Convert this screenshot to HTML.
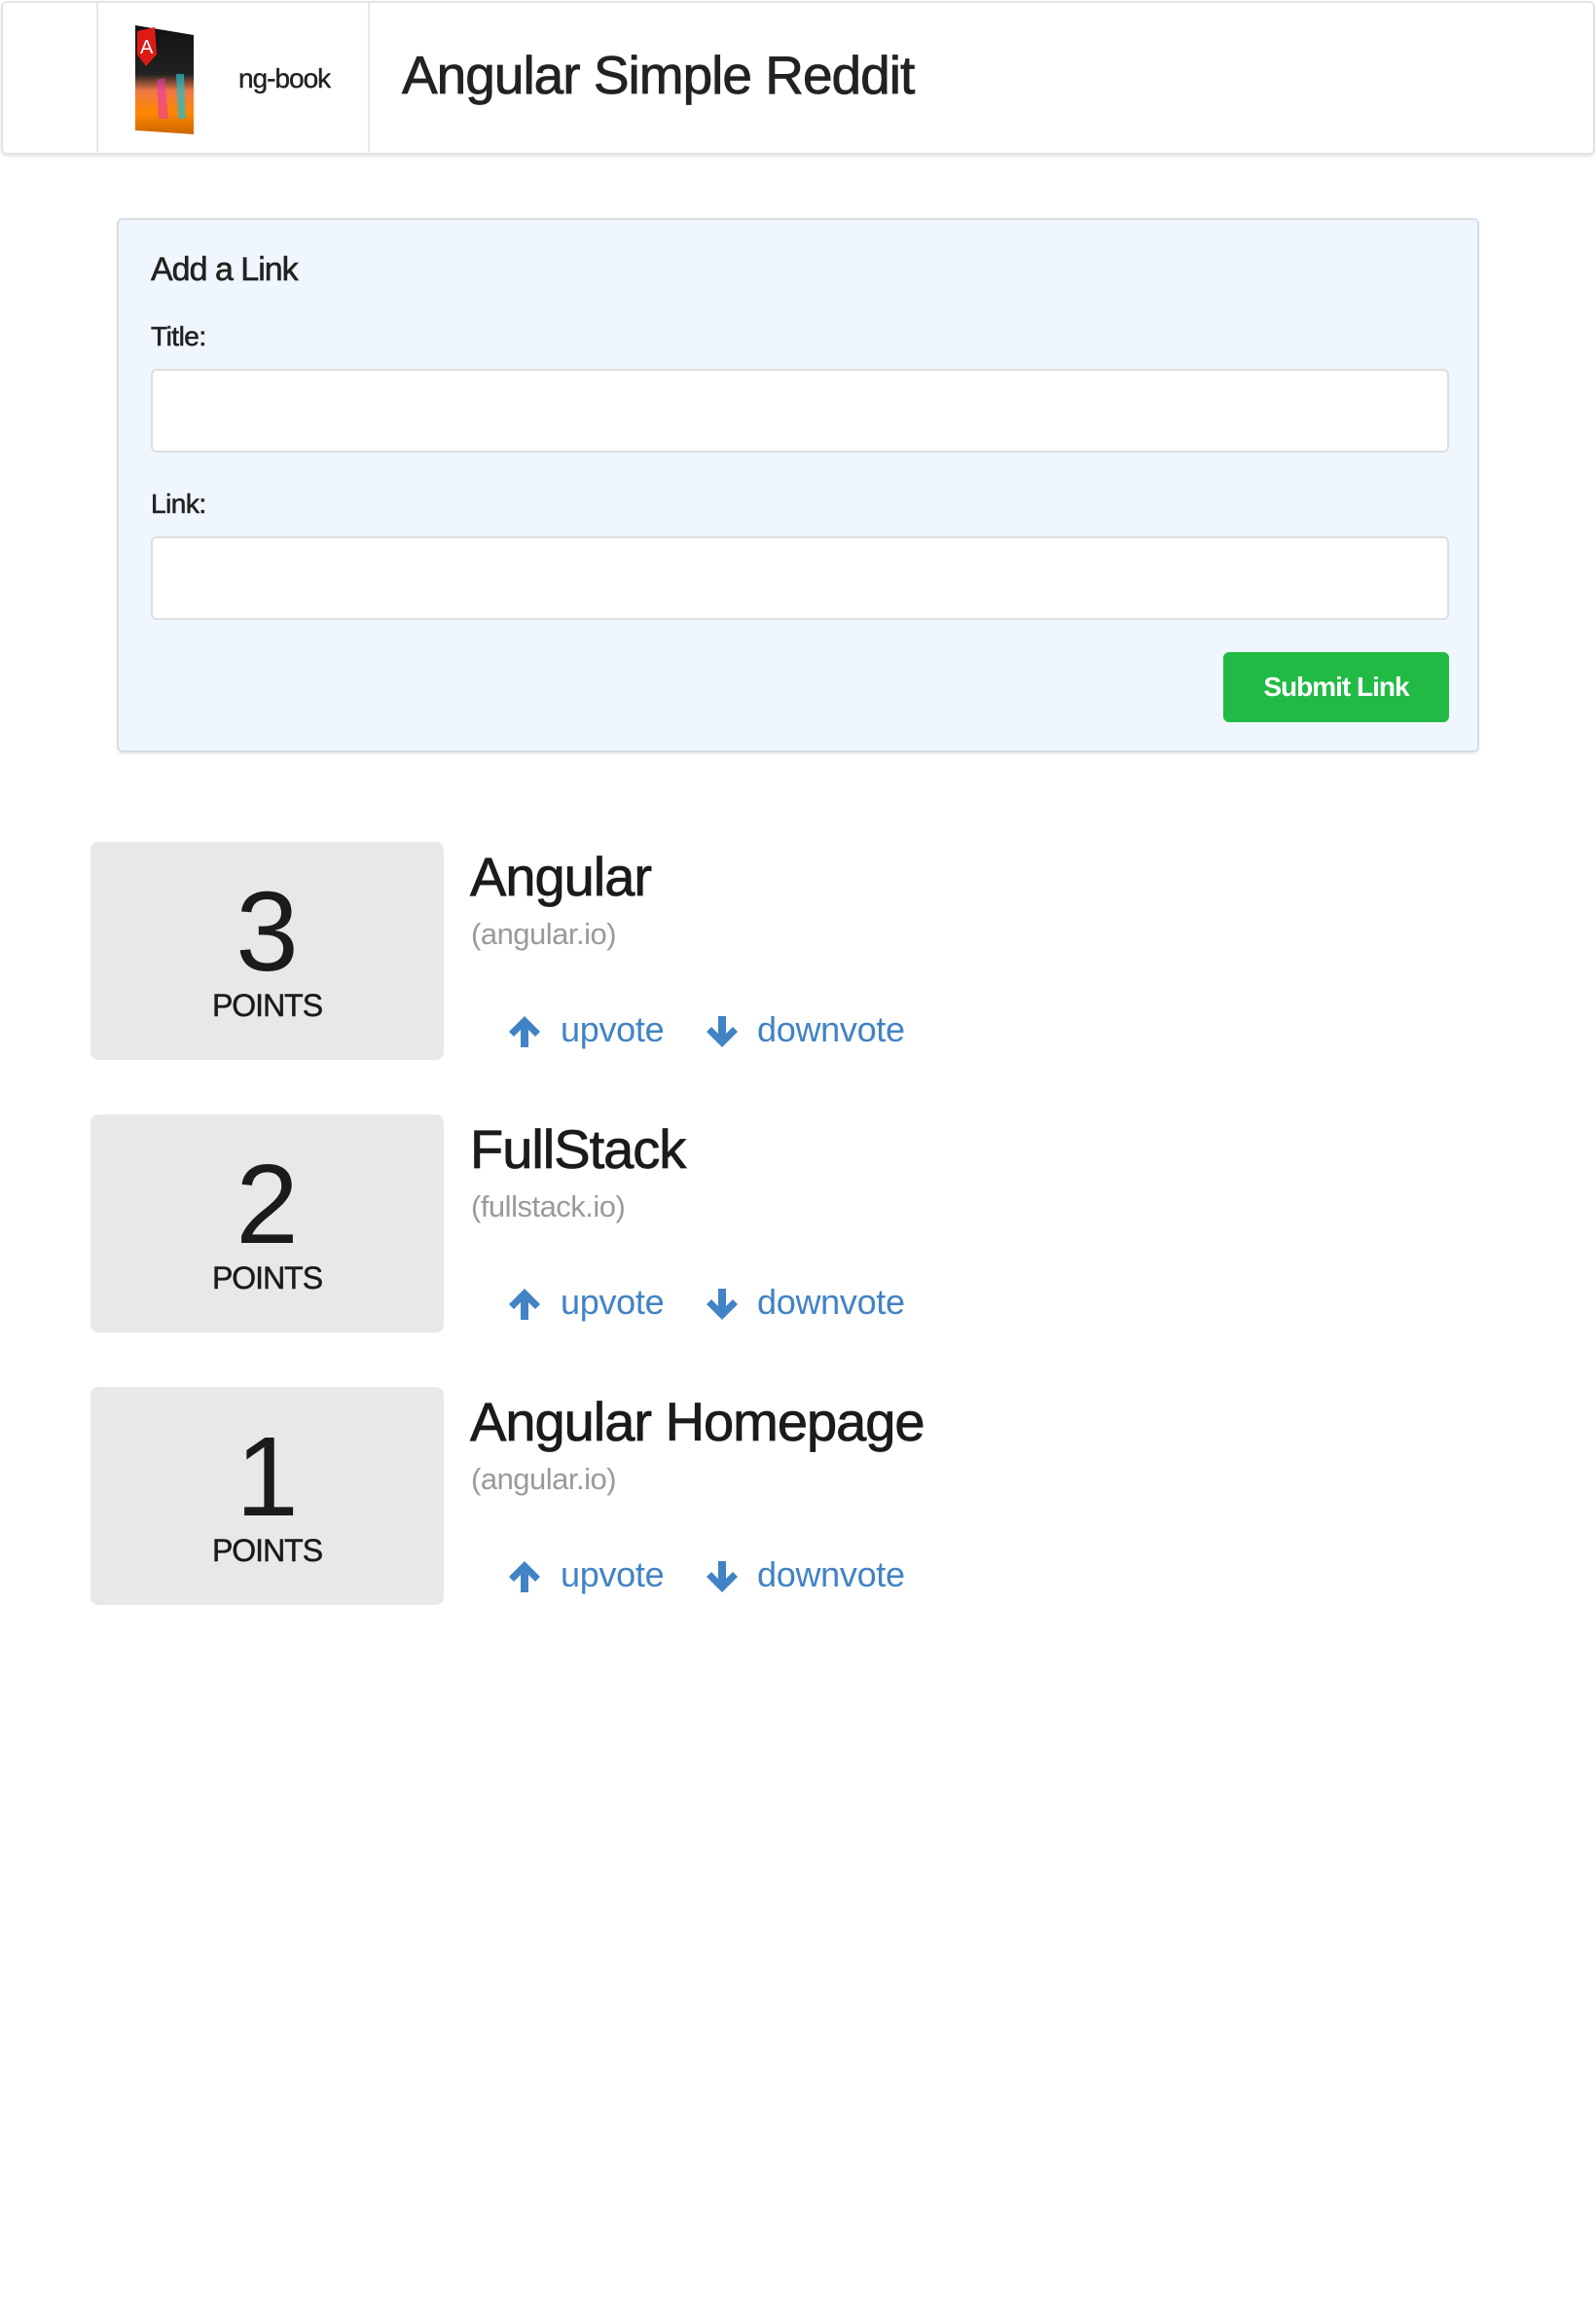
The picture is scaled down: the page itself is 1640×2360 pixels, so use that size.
<!DOCTYPE html>
<html><head><meta charset="utf-8"><style>
*{box-sizing:border-box;margin:0;padding:0}
body{width:1640px;height:2360px;background:#fff;font-family:"Liberation Sans",sans-serif;color:#222;position:relative;overflow:hidden}
.a{position:absolute;white-space:nowrap}
.hdr{position:absolute;left:1px;top:1px;width:1638px;height:158px;border:2px solid #e4e4e4;border-radius:6px;box-shadow:0 2px 3px rgba(0,0,0,.1)}
.vl{position:absolute;top:0;width:2px;height:155px;background:#e8e8e8}
.form{position:absolute;left:120px;top:224px;width:1400px;height:549px;background:#eff6fd;border:2px solid #d6dde5;border-radius:6px;box-shadow:0 2px 3px rgba(0,0,0,.08)}
.inp{position:absolute;left:33px;width:1334px;height:86px;background:#fff;border:2px solid #dedede;border-radius:6px}
.btn{position:absolute;left:1135px;top:444px;width:232px;height:72px;background:#21ba45;border-radius:6px;color:#fff;font-weight:bold;font-size:28px;text-align:center;line-height:72px;letter-spacing:-1px}
.box{position:absolute;left:93px;width:363px;height:224px;background:#e8e8e8;border-radius:8px;text-align:center}
.num{position:absolute;left:0;width:100%;top:32px;font-size:116px;line-height:120px;color:#1b1b1b}
.pts{position:absolute;left:0;width:100%;top:150px;font-size:32px;color:#1b1b1b;letter-spacing:-1px;-webkit-text-stroke:0.5px #1b1b1b}
.t{font-size:56px;color:#1b1b1b;letter-spacing:-1px;-webkit-text-stroke:0.8px #1b1b1b}
.d{font-size:31px;color:#9a9a9a;letter-spacing:-0.5px}
.v{font-size:36px;color:#4183c4;letter-spacing:-0.3px}
.lb{-webkit-text-stroke:0.6px #222}
</style></head><body>
<div class="hdr">
 <div class="vl" style="left:96px"></div>
 <div class="vl" style="left:375px"></div>
 <svg class="a" style="left:130px;top:19px" width="72" height="120" viewBox="0 0 72 120">
  <defs><linearGradient id="g" x1="0" y1="0" x2="0" y2="1"><stop offset="0" stop-color="#111"/><stop offset=".45" stop-color="#222"/><stop offset=".6" stop-color="#e74"/><stop offset=".8" stop-color="#f80"/><stop offset="1" stop-color="#c60"/></linearGradient></defs>
  <polygon points="6,4 66,14 66,116 6,112" fill="url(#g)"/>
  <polygon points="48,54 56,54 58,100 50,100" fill="#2bc" opacity=".7"/>
  <polygon points="28,60 36,58 40,100 30,100" fill="#e3a" opacity=".6"/>
  <polygon points="8,10 26,6 28,34 17,46 8,34" fill="#dd1b16"/>
  <text x="11" y="33" font-size="20" fill="#fff" font-family="Liberation Sans">A</text>
 </svg>
 <div class="a" style="left:242px;top:62px;font-size:28px;letter-spacing:-1px;-webkit-text-stroke:0.4px #222">ng-book</div>
 <div class="a" style="left:410px;top:42px;font-size:55px;letter-spacing:-1px;-webkit-text-stroke:0.8px #222">Angular Simple Reddit</div>
</div>

<div class="form">
 <div class="a lb" style="left:33px;top:32px;font-size:34px;letter-spacing:-1px">Add a Link</div>
 <div class="a lb" style="left:33px;top:104px;font-size:28px;letter-spacing:-0.5px">Title:</div>
 <div class="inp" style="top:153px"></div>
 <div class="a lb" style="left:33px;top:276px;font-size:28px;letter-spacing:-0.5px">Link:</div>
 <div class="inp" style="top:325px"></div>
 <div class="btn">Submit Link</div>
</div>

<div class="box" style="top:865px"><div class="num">3</div><div class="pts">POINTS</div></div>
<div class="a t" style="left:483px;top:868px">Angular</div>
<div class="a d" style="left:484px;top:942px">(angular.io)</div>

<div class="box" style="top:1145px"><div class="num">2</div><div class="pts">POINTS</div></div>
<div class="a t" style="left:483px;top:1148px">FullStack</div>
<div class="a d" style="left:484px;top:1222px">(fullstack.io)</div>

<div class="box" style="top:1425px"><div class="num">1</div><div class="pts">POINTS</div></div>
<div class="a t" style="left:483px;top:1428px">Angular Homepage</div>
<div class="a d" style="left:484px;top:1502px">(angular.io)</div>

<svg width="0" height="0" style="position:absolute"><defs>
 <g id="up"><path d="M17 2 L1 18 L6 23 L13 16 L13 34 L21 34 L21 16 L28 23 L33 18 Z" fill="#4183c4"/></g>
 <g id="dn"><path d="M17 34 L1 18 L6 13 L13 20 L13 2 L21 2 L21 20 L28 13 L33 18 Z" fill="#4183c4"/></g>
</defs></svg>

<svg class="a" style="left:522px;top:1042px" width="34" height="36"><use href="#up"/></svg>
<div class="a v" style="left:576px;top:1037px">upvote</div>
<svg class="a" style="left:725px;top:1042px" width="34" height="36"><use href="#dn"/></svg>
<div class="a v" style="left:778px;top:1037px">downvote</div>

<svg class="a" style="left:522px;top:1322px" width="34" height="36"><use href="#up"/></svg>
<div class="a v" style="left:576px;top:1317px">upvote</div>
<svg class="a" style="left:725px;top:1322px" width="34" height="36"><use href="#dn"/></svg>
<div class="a v" style="left:778px;top:1317px">downvote</div>

<svg class="a" style="left:522px;top:1602px" width="34" height="36"><use href="#up"/></svg>
<div class="a v" style="left:576px;top:1597px">upvote</div>
<svg class="a" style="left:725px;top:1602px" width="34" height="36"><use href="#dn"/></svg>
<div class="a v" style="left:778px;top:1597px">downvote</div>
</body></html>
